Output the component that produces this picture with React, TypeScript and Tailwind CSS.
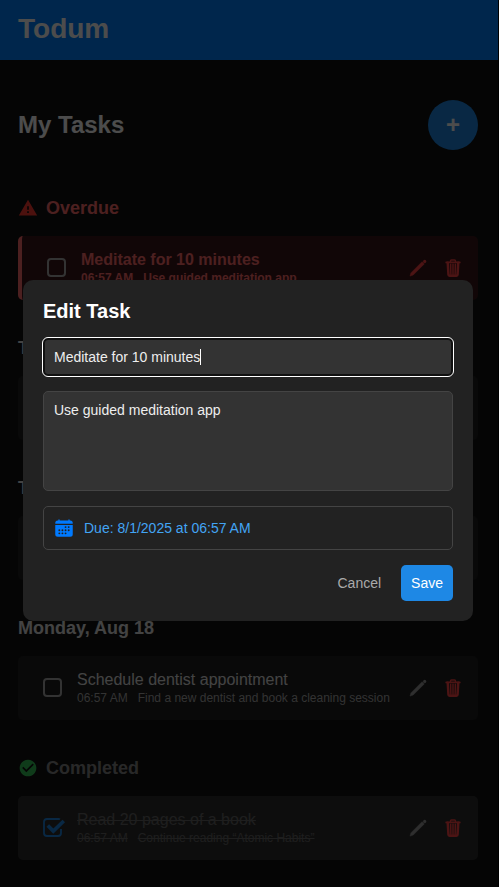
import { IoCalendar } from "react-icons/io5";
import { MdCheckCircle, MdWarning } from "react-icons/md";

type Task = {
  title: string;
  time: string;
  note: string;
  state: "overdue" | "open" | "done";
};

function CheckBox({ checked }: { checked: boolean }) {
  if (!checked) {
    return <span className="h-[19px] w-[19px] shrink-0 rounded-[4px] border-2 border-[#aaaaaa]" />;
  }
  return (
    <svg className="h-[19px] w-[22px] shrink-0" viewBox="0 0 22 19" fill="none">
      <path
        d="M17 1.3Q16.5 1 15.5 1H4Q1 1 1 4v11q0 3 3 3h11q3 0 3-3v-4"
        stroke="#1e88e5"
        strokeWidth="1.8"
      />
      <path d="M4.8 7.5l5.5 5.6L20.8 3" stroke="#1e88e5" strokeWidth="3.6" />
    </svg>
  );
}

function PencilIcon({ className }: { className: string }) {
  return (
    <svg className={`h-5 w-5 ${className}`} viewBox="0 0 20 20" fill="currentColor">
      <path d="M14.1 3.7l2.2 2.2L5.2 17 2 18.1 2.9 14.9z" stroke="currentColor" strokeWidth="0.5" />
      <circle cx="16.7" cy="3.4" r="1.6" />
    </svg>
  );
}

function TrashIcon() {
  return (
    <svg
      className="h-5 w-5 text-[#ff4444]"
      viewBox="0 0 512 512"
      fill="none"
      stroke="currentColor"
      strokeLinecap="round"
      strokeLinejoin="round"
    >
      <path strokeWidth="64" d="M122 124l18 304c1 16 12 24 28 24h176c16 0 27-8 28-24l18-304" />
      <path strokeWidth="48" d="M84 112h344" />
      <path strokeWidth="38" d="M192 108V74a24 24 0 0124-24h80a24 24 0 0124 24v34" />
      <path strokeWidth="38" d="M256 160v260M196 160l6 260M316 160l-6 260" />
    </svg>
  );
}

function TaskCard({ task }: { task: Task }) {
  const overdue = task.state === "overdue";
  const done = task.state === "done";
  const card = overdue ? "border-l-4 border-[#ff6b6b] bg-[#3a1519]" : done ? "bg-[#2e2e2e]" : "bg-[#1e1e1e]";
  const title = overdue ? "font-bold text-[#ff6b6b]" : done ? "text-[#666666] line-through" : "text-[#e0e0e0]";
  const note = overdue ? "font-bold text-[#ff6b6b]" : done ? "text-[#666666] line-through" : "text-[#aaaaaa]";
  return (
    <div className={`flex h-16 items-center rounded-[5px] pr-[15px] pl-[25px] ${card}`}>
      <div className="flex w-[34px] shrink-0 pb-px">
        <CheckBox checked={done} />
      </div>
      <div className="min-w-0 flex-1 whitespace-nowrap">
        <p className={`text-base leading-[18px] ${title}`}>{task.title}</p>
        <div className={`mt-0.5 flex gap-2.5 text-xs leading-[14px] ${note}`}>
          <span>{task.time}</span>
          <span>{task.note}</span>
        </div>
      </div>
      <div className="flex gap-[15px]">
        <PencilIcon className={overdue ? "text-[#ff4444]" : "text-[#999999]"} />
        <TrashIcon />
      </div>
    </div>
  );
}

function Section({ label, task }: { label: string; task: Task }) {
  const color =
    task.state === "overdue" ? "text-[#ff6b6b]" : task.state === "done" ? "text-[#888888]" : "text-[#e0e0e0]";
  return (
    <section className="h-[140px]">
      <h3 className={`flex h-14 items-center gap-2 text-lg font-bold ${color}`}>
        {task.state === "overdue" && <MdWarning size={20} className="text-[#ff3b30]" />}
        {task.state === "done" && <MdCheckCircle size={20} className="text-[#34c759]" />}
        {label}
      </h3>
      <TaskCard task={task} />
    </section>
  );
}

const sections: { label: string; task: Task }[] = [
  {
    label: "Overdue",
    task: { title: "Meditate for 10 minutes", time: "06:57 AM", note: "Use guided meditation app", state: "overdue" },
  },
  { label: "Today", task: { title: "", time: "", note: "", state: "open" } },
  { label: "Tomorrow", task: { title: "", time: "", note: "", state: "open" } },
  {
    label: "Monday, Aug 18",
    task: {
      title: "Schedule dentist appointment",
      time: "06:57 AM",
      note: "Find a new dentist and book a cleaning session",
      state: "open",
    },
  },
  {
    label: "Completed",
    task: { title: "Read 20 pages of a book", time: "06:57 AM", note: "Continue reading “Atomic Habits”", state: "done" },
  },
];

function EditDialog() {
  return (
    <div className="w-[450px] rounded-[10px] bg-[#222222] p-5 text-sm">
      <h2 className="mb-[15px] text-xl leading-[23px] font-bold text-white">Edit Task</h2>
      <div className="mb-[15px] flex h-[38px] items-center rounded-[5px] border-2 border-[#101010] bg-[#333333] px-[9px] text-[#eeeeee] outline outline-white">
        <span>Meditate for 10 minutes</span>
        <span className="h-4 w-px bg-white" />
      </div>
      <div className="mb-[15px] h-[100px] rounded-[5px] border border-[#444444] bg-[#333333] px-2.5 py-2 text-[#eeeeee]">
        Use guided meditation app
      </div>
      <div className="mb-[15px] flex h-11 items-center gap-2.5 rounded-[5px] border border-[#444444] px-2.5 text-[#42a5f5]">
        <IoCalendar size={20} className="text-[#007aff]" />
        <span>Due: 8/1/2025 at 06:57 AM</span>
      </div>
      <div className="flex justify-end gap-2.5">
        <button className="h-9 px-2.5 text-[#aaaaaa]">Cancel</button>
        <button className="h-9 rounded-[5px] bg-[#1e88e5] px-2.5 text-white">Save</button>
      </div>
    </div>
  );
}

export default function App() {
  return (
    <div className="relative h-[887px] w-[499px] overflow-hidden border-r border-black bg-[#121212] font-['Liberation_Sans',Arial,sans-serif]">
      <header className="flex h-[60px] items-center bg-[#007fff] px-[18px] pb-[3px] text-[28px] font-bold text-white">
        Todum
      </header>
      <main className="pr-5 pl-[18px]">
        <div className="flex h-[120px] items-center justify-between pt-[10px]">
          <h1 className="text-2xl font-bold text-white">My Tasks</h1>
          <button className="flex h-[50px] w-[50px] items-center justify-center rounded-full bg-[#1e88e5] text-2xl font-bold text-white">
            +
          </button>
        </div>
        {sections.map((s) => (
          <Section key={s.label} label={s.label} task={s.task} />
        ))}
      </main>
      <div className="absolute inset-0 flex items-start justify-center bg-black/70 pt-[280px] pr-0.5">
        <EditDialog />
      </div>
    </div>
  );
}
